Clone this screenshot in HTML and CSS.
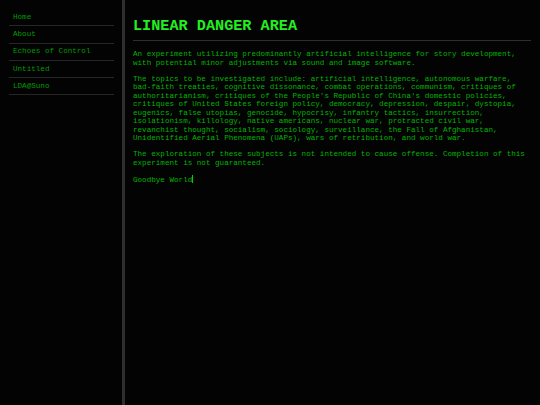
FILE: index.html
```html
<!DOCTYPE html>
<html lang="en">
<head>
<meta charset="utf-8">
<title>Linear Danger Area</title>
<link rel="stylesheet" href="styles.css">
</head>
<body>
<div class="layout">
  <aside class="sidebar">
    <ul class="nav">
      <li><a href="#">Home</a></li>
      <li><a href="#">About</a></li>
      <li><a href="#">Echoes of Control</a></li>
      <li><a href="#">Untitled</a></li>
      <li><a href="#">LDA@Suno</a></li>
    </ul>
  </aside>
  <main class="content">
    <h1 class="title">LINEAR DANGER AREA</h1>
    <p>An experiment utilizing predominantly artificial intelligence for story development, with potential minor adjustments via sound and image software.</p>
    <p>The topics to be investigated include: artificial intelligence, autonomous warfare, bad-faith treaties, cognitive dissonance, combat operations, communism, critiques of authoritarianism, critiques of the People's Republic of China's domestic policies, critiques of United States foreign policy, democracy, depression, despair, dystopia, eugenics, false utopias, genocide, hypocrisy, infantry tactics, insurrection, isolationism, killology, native americans, nuclear war, protracted civil war, revanchist thought, socialism, sociology, surveillance, the Fall of Afghanistan, Unidentified Aerial Phenomena (UAPs), wars of retribution, and world war.</p>
    <p>The exploration of these subjects is not intended to cause offense. Completion of this experiment is not guaranteed.</p>
    <p>Goodbye World<span class="cursor"></span></p>
  </main>
</div>
</body>
</html>
```

FILE: styles.css
```css
html, body {
  margin: 0;
  padding: 0;
  background: #030303;
  height: 100%;
}

body {
  font-family: "Liberation Mono", "Courier New", monospace;
  font-size: 7.6px;
  line-height: 8.5px;
  color: #00b400;
}

.layout {
  display: flex;
  min-height: 100vh;
}

.sidebar {
  width: 122px;
  flex: 0 0 122px;
  box-sizing: border-box;
  padding: 9px 8px 0 9px;
}

.nav {
  list-style: none;
  margin: 0;
  padding: 0;
}

.nav li {
  padding: 3.9px 4px;
  border-bottom: 1px solid #262626;
}

.nav a {
  color: #009c00;
  text-decoration: none;
}

.content {
  flex: 1;
  border-left: 3px solid #2e2e2e;
  padding: 0 9px 0 8px;
}

.title {
  margin: 18px 0 9px;
  padding-bottom: 5px;
  border-bottom: 1px solid #2e2e2e;
  font-size: 15.2px;
  line-height: 17px;
  font-weight: bold;
  color: #22ee22;
}

.content p {
  margin: 7.5px 0;
  hyphens: manual;
}

.cursor {
  display: inline-block;
  width: 1px;
  height: 8px;
  background: #00d000;
  vertical-align: -1px;
}
```
